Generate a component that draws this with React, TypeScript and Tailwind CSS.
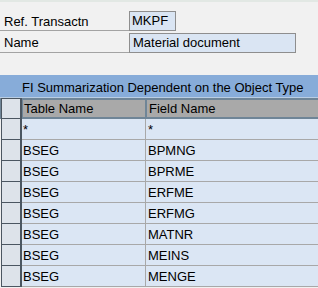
import React from "react";

const rows: [string, string][] = [
  ["*", "*"],
  ["BSEG", "BPMNG"],
  ["BSEG", "BPRME"],
  ["BSEG", "ERFME"],
  ["BSEG", "ERFMG"],
  ["BSEG", "MATNR"],
  ["BSEG", "MEINS"],
  ["BSEG", "MENGE"],
];

export default function App() {
  return (
    <div
      className="w-[318px] h-[288px] overflow-hidden bg-[#f1f1f1] text-[13px] leading-[15px] text-black"
      style={{ fontFamily: '"Liberation Sans", Arial, sans-serif' }}
    >
      <div className="h-[2px] bg-[#e2e8e4]" />
      <div className="pt-[9px] flex flex-col gap-[2px]">
        <div className="flex h-[20px]">
          <div className="w-[129px] h-full border-b border-[#a3a3a3] pl-[4px] pt-[3px]">Ref. Transactn</div>
          <div className="w-[47px] h-full border border-[#8e8e8e] bg-[#dae5f3] pl-[2px] pt-[1px]">MKPF</div>
        </div>
        <div className="flex h-[20px]">
          <div className="w-[129px] h-full border-b border-[#a3a3a3] pl-[4px] pt-[2px]">Name</div>
          <div className="w-[167px] h-full border border-[#8e8e8e] bg-[#dae5f3] pl-[3px] pt-[1px]">Material document</div>
        </div>
      </div>
      <div className="mt-[22px] h-[22px] bg-[#87acd9] pl-[22px] pt-[5px]">FI Summarization Dependent on the Object Type</div>
      <div className="flex flex-col">
        <div className="flex h-[22px] bg-[#6f8597] border-t border-[#b9cde3]">
          <div className="w-[21px] h-full ml-[1px] bg-[#dde3ea] border border-[#4b5661] border-r-2" />
          <div className="w-[122px] ml-[1px] my-[2px] bg-[#a9a9a9] pl-[1px] pt-[1px]">Table Name</div>
          <div className="flex-1 ml-[2px] my-[2px] bg-[#a9a9a9] pl-[2px] pt-[1px]">Field Name</div>
        </div>
        {rows.map(([a, b], i) => (
          <div key={i} className="flex h-[21px]">
            <div className="w-[21px] h-full ml-[1px] bg-[#dde3ea] border-l border-b border-r-2 border-[#4b5661]" />
            <div className="w-[124px] h-full bg-[#dbe6f4] border-b border-r border-[#a8a8a8] pl-[1px] pt-[3px]">{a}</div>
            <div className="flex-1 h-full bg-[#dbe6f4] border-b border-[#a8a8a8] pl-[2px] pt-[3px]">{b}</div>
          </div>
        ))}
      </div>
    </div>
  );
}
